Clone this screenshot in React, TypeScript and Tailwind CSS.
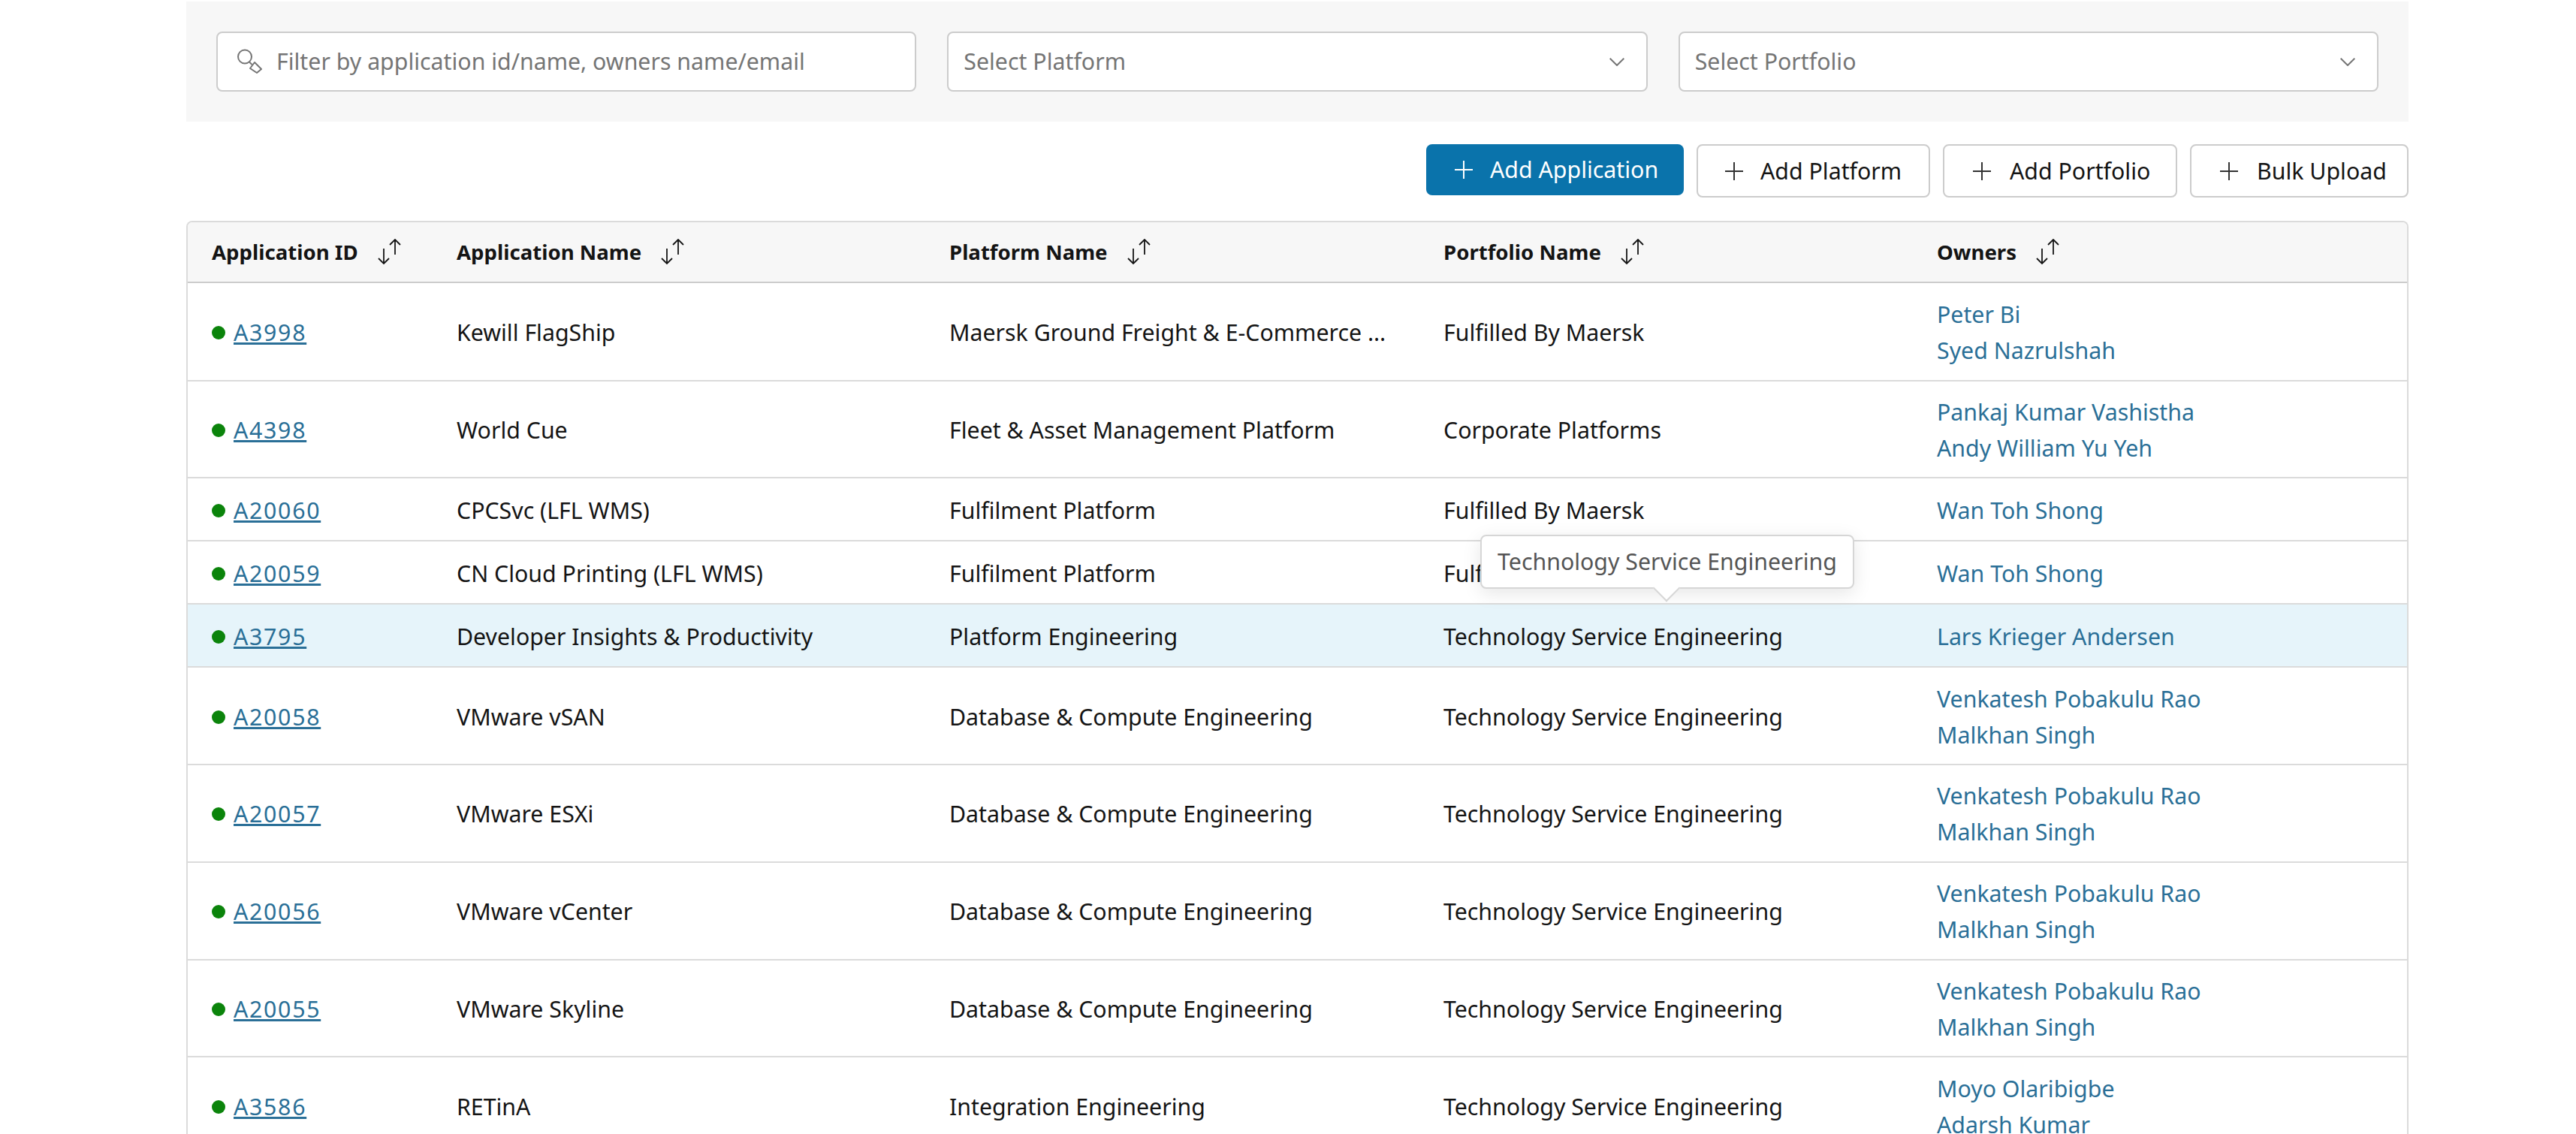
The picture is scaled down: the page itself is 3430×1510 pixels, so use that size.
const font = { fontFamily: '"Noto Sans", sans-serif' };

const rows = [
  { id: "A3998", name: "Kewill FlagShip", platform: "Maersk Ground Freight & E-Commerce ...", portfolio: "Fulfilled By Maersk", owners: ["Peter Bi", "Syed Nazrulshah"] },
  { id: "A4398", name: "World Cue", platform: "Fleet & Asset Management Platform", portfolio: "Corporate Platforms", owners: ["Pankaj Kumar Vashistha", "Andy William Yu Yeh"] },
  { id: "A20060", name: "CPCSvc (LFL WMS)", platform: "Fulfilment Platform", portfolio: "Fulfilled By Maersk", owners: ["Wan Toh Shong"] },
  { id: "A20059", name: "CN Cloud Printing (LFL WMS)", platform: "Fulfilment Platform", portfolio: "Fulfilled By Maersk", owners: ["Wan Toh Shong"] },
  { id: "A3795", name: "Developer Insights & Productivity", platform: "Platform Engineering", portfolio: "Technology Service Engineering", owners: ["Lars Krieger Andersen"], active: true },
  { id: "A20058", name: "VMware vSAN", platform: "Database & Compute Engineering", portfolio: "Technology Service Engineering", owners: ["Venkatesh Pobakulu Rao", "Malkhan Singh"] },
  { id: "A20057", name: "VMware ESXi", platform: "Database & Compute Engineering", portfolio: "Technology Service Engineering", owners: ["Venkatesh Pobakulu Rao", "Malkhan Singh"] },
  { id: "A20056", name: "VMware vCenter", platform: "Database & Compute Engineering", portfolio: "Technology Service Engineering", owners: ["Venkatesh Pobakulu Rao", "Malkhan Singh"] },
  { id: "A20055", name: "VMware Skyline", platform: "Database & Compute Engineering", portfolio: "Technology Service Engineering", owners: ["Venkatesh Pobakulu Rao", "Malkhan Singh"] },
  { id: "A3586", name: "RETinA", platform: "Integration Engineering", portfolio: "Technology Service Engineering", owners: ["Moyo Olaribigbe", "Adarsh Kumar"] },
];

function SortIcon() {
  return (
    <svg width="32" height="34" viewBox="0 0 32 34" fill="none" stroke="#141414" strokeWidth="1.8" className="shrink-0">
      <path d="M8 13v20M1 26l7 7 7-7" />
      <path d="M23 21V1M16 8l7-7 7 7" />
    </svg>
  );
}

function Plus({ color }: { color: string }) {
  return (
    <svg width="24" height="24" viewBox="0 0 24 24" stroke={color} strokeWidth="2" className="shrink-0">
      <path d="M12 0v24M0 12h24" />
    </svg>
  );
}

function Chevron() {
  return (
    <svg width="20" height="11" viewBox="0 0 20 11" fill="none" stroke="#757575" strokeWidth="2">
      <path d="M0.7 0.7L10 10l9.3-9.3" />
    </svg>
  );
}

function Select({ label }: { label: string }) {
  return (
    <div className="h-[80px] flex items-center justify-between pl-[20px] pr-[29px] bg-white border-2 border-[#cccccc] rounded-[8px] text-[#757575]">
      <span>{label}</span>
      <Chevron />
    </div>
  );
}

function OutlineButton({ label, className }: { label: string; className: string }) {
  return (
    <button className={`${className} h-[71px] flex items-center bg-white border-2 border-[#cccccc] rounded-[8px] text-[#141414]`}>
      <Plus color="#333333" />
      {label}
    </button>
  );
}

export default function App() {
  return (
    <div className="h-[1510px] overflow-hidden bg-white pt-[2px] pl-[248px] pr-[223px] text-[30.3px] leading-[48px] text-[#141414]" style={font}>
      <div className="h-[160px] bg-[#f7f7f7] p-[40px] grid grid-cols-3 gap-[41px]">
        <div className="h-[80px] flex items-center gap-[18px] pl-[26px] bg-white border-2 border-[#cccccc] rounded-[8px] text-[#757575]">
          <svg width="34" height="34" viewBox="0 0 34 34" fill="none" stroke="#757575" strokeWidth="2" strokeLinejoin="round" className="shrink-0">
            <circle cx="10" cy="10.5" r="9" />
            <path d="M16 17.5l3.5 3.5" />
            <path d="M17 26l6-8 9 9-6 5z" />
          </svg>
          <span>Filter by application id/name, owners name/email</span>
        </div>
        <Select label="Select Platform" />
        <Select label="Select Portfolio" />
      </div>

      <div className="mt-[30px] flex justify-end gap-[17px]">
        <button className="w-[343px] h-[68px] flex items-center gap-[23px] pl-[38px] bg-[#0a73ab] rounded-[8px] text-white">
          <Plus color="#ffffff" />
          Add Application
        </button>
        <OutlineButton label="Add Platform" className="w-[311px] pl-[36px] gap-[23px]" />
        <OutlineButton label="Add Portfolio" className="w-[312px] pl-[38px] gap-[25px]" />
        <OutlineButton label="Bulk Upload" className="w-[291px] pl-[38px] gap-[25px]" />
      </div>

      <div className="relative mt-[31px]">
        <div className="border-x-2 border-t-2 border-[#dbdbdb] rounded-t-[8px] overflow-hidden">
          <div className="h-[81px] pb-[2px] grid grid-cols-[326px_656px_658px_657px_1fr] items-center bg-[#f7f7f7] border-b-2 border-[#cccccc] font-bold text-[27.6px]">
            {["Application ID", "Application Name", "Platform Name", "Portfolio Name", "Owners"].map((h) => (
              <div key={h} className="flex items-center gap-[26px] pl-[32px]">
                {h}
                <SortIcon />
              </div>
            ))}
          </div>
          <div className="[&>div:first-child]:h-[130.5px]">
            {rows.map((r) => (
              <div
                key={r.id}
                className={`grid grid-cols-[326px_656px_658px_657px_1fr] items-center pt-[3px] border-b-2 border-[#dbdbdb] ${r.owners.length > 1 ? "h-[129.8px]" : "h-[84px]"} ${r.active ? "bg-[#e6f4fa]" : ""}`}
              >
                <div className="flex items-center gap-[11px] pl-[32px]">
                  <span className="w-[18px] h-[18px] rounded-full bg-[#0b840b]" />
                  <a href="#" className="text-[#2a6f97] underline tracking-[1.7px]">{r.id}</a>
                </div>
                <div className="pl-[32px]">{r.name}</div>
                <div className="pl-[32px]">{r.platform}</div>
                <div className="pl-[32px]">{r.portfolio}</div>
                <div className="pl-[32px] text-[#2a6f97]">
                  {r.owners.map((o) => (
                    <div key={o}>{o}</div>
                  ))}
                </div>
              </div>
            ))}
          </div>
        </div>

        <div className="absolute left-[1723px] top-[418px] w-[498px] h-[72px] flex items-center justify-center bg-white border-2 border-[#d6d6d6] rounded-[8px] text-[#555555] shadow-[0_6px_24px_rgba(0,0,0,0.1)]">
          Technology Service Engineering
          <span className="absolute left-[233px] top-[56px] w-[26px] h-[26px] rotate-45 bg-white border-r-2 border-b-2 border-[#d6d6d6]" />
        </div>
      </div>
    </div>
  );
}
